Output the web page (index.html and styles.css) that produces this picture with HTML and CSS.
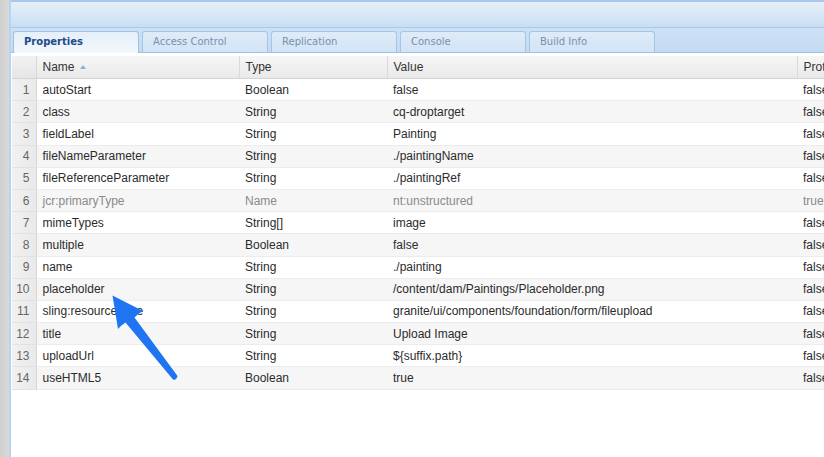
FILE: index.html
```html
<!DOCTYPE html>
<html>
<head>
<meta charset="utf-8">
<link rel="stylesheet" href="styles.css">
</head>
<body>
<div class="app">
  <div class="strip"></div>
  <div class="panel">
    <div class="topbar"></div>
    <div class="tabstrip">
      <div class="tab active">Properties</div>
      <div class="tab">Access Control</div>
      <div class="tab">Replication</div>
      <div class="tab">Console</div>
      <div class="tab">Build Info</div>
    </div>
    <div class="gridwrap">
      <table class="grid">
        <colgroup>
          <col class="c-num"><col class="c-name"><col class="c-type"><col class="c-value"><col class="c-prot">
        </colgroup>
        <thead>
          <tr><th class="num"></th><th>Name <span class="sort"></span></th><th>Type</th><th>Value</th><th>Prot</th></tr>
        </thead>
        <tbody>
          <tr><td class="num">1</td><td>autoStart</td><td>Boolean</td><td>false</td><td>false</td></tr>
          <tr><td class="num">2</td><td>class</td><td>String</td><td>cq-droptarget</td><td>false</td></tr>
          <tr><td class="num">3</td><td>fieldLabel</td><td>String</td><td>Painting</td><td>false</td></tr>
          <tr><td class="num">4</td><td>fileNameParameter</td><td>String</td><td>./paintingName</td><td>false</td></tr>
          <tr><td class="num">5</td><td>fileReferenceParameter</td><td>String</td><td>./paintingRef</td><td>false</td></tr>
          <tr class="muted"><td class="num">6</td><td>jcr:primaryType</td><td>Name</td><td>nt:unstructured</td><td>true</td></tr>
          <tr><td class="num">7</td><td>mimeTypes</td><td>String[]</td><td>image</td><td>false</td></tr>
          <tr><td class="num">8</td><td>multiple</td><td>Boolean</td><td>false</td><td>false</td></tr>
          <tr><td class="num">9</td><td>name</td><td>String</td><td>./painting</td><td>false</td></tr>
          <tr><td class="num">10</td><td>placeholder</td><td>String</td><td>/content/dam/Paintings/Placeholder.png</td><td>false</td></tr>
          <tr><td class="num">11</td><td>sling:resourceType</td><td>String</td><td>granite/ui/components/foundation/form/fileupload</td><td>false</td></tr>
          <tr><td class="num">12</td><td>title</td><td>String</td><td>Upload Image</td><td>false</td></tr>
          <tr><td class="num">13</td><td>uploadUrl</td><td>String</td><td>${suffix.path}</td><td>false</td></tr>
          <tr><td class="num">14</td><td>useHTML5</td><td>Boolean</td><td>true</td><td>false</td></tr>
        </tbody>
      </table>
    </div>
  </div>
</div>
<svg class="arrow" width="824" height="457" viewBox="0 0 824 457">
  <path d="M112.5 295.5 L143 311 Q137.5 314 134.5 317.5 L177.5 376 Q176.5 380.5 173 379.5 L125.5 322.5 Q121 325.5 118 329 Z" fill="#1f74f2"/>
</svg>
</body>
</html>
```

FILE: styles.css
```css
html, body {
  margin: 0;
  padding: 0;
}
body {
  width: 824px;
  height: 457px;
  overflow: hidden;
  background: #ffffff;
  position: relative;
  font-family: "Liberation Sans", Arial, sans-serif;
}
.app {
  display: flex;
  height: 457px;
}
.strip {
  width: 9px;
  flex: none;
  background: linear-gradient(to right, #cfcfcf, #dadada);
}
.panel {
  flex: 1;
  display: flex;
  flex-direction: column;
  border-left: 2px solid #b7d3ef;
  min-width: 0;
}
.topbar {
  height: 28px;
  flex: none;
  border-top: 2px solid #a9c9ea;
  box-sizing: border-box;
  background: linear-gradient(to bottom, #e6f0f9 0%, #dae9f7 40%, #c9def3 100%);
  border-bottom: 1px solid #a8c9ec;
}
.tabstrip {
  height: 25px;
  flex: none;
  box-sizing: border-box;
  display: flex;
  align-items: flex-end;
  gap: 3px;
  padding-left: 2px;
  background: linear-gradient(to bottom, #cde1f5, #c3dbf2);
  border-bottom: 1px solid #9dc0e6;
}
.tab {
  width: 126px;
  height: 21px;
  box-sizing: border-box;
  border: 1px solid #a5c5e8;
  border-bottom: none;
  border-radius: 3px 3px 0 0;
  background: linear-gradient(to bottom, #dfebf8, #d2e4f5);
  font-family: "DejaVu Sans", Verdana, sans-serif;
  font-size: 10px;
  line-height: 20px;
  color: #7990ad;
  padding-left: 10px;
}
.tab.active {
  height: 22px;
  font-weight: bold;
  color: #1d4a8a;
  background: linear-gradient(to bottom, #e4eff9, #f4f8fc);
  border-color: #9fc1e6;
  margin-bottom: -1px;
}
.gridwrap {
  padding-top: 3px;
  padding-left: 1px;
}
.grid {
  table-layout: fixed;
  border-collapse: collapse;
  width: 900px;
  font-size: 12px;
  color: #2b2b2b;
}
.c-num { width: 24px; }
.c-name { width: 203px; }
.c-type { width: 148px; }
.c-value { width: 410px; }
.c-prot { width: 115px; }
.grid th {
  height: 22px;
  padding: 0 0 0 6px;
  text-align: left;
  font-weight: normal;
  color: #333;
  background: linear-gradient(to bottom, #f6f6f6, #e9e9e9);
  border-right: 1px solid #dadada;
  border-bottom: 1px solid #d4d4d4;
  white-space: nowrap;
}
.grid th.num {
  background: linear-gradient(to bottom, #f2f2f2, #e6e6e6);
  border-right: 1px solid #d8d8d8;
}
.sort {
  display: inline-block;
  width: 0;
  height: 0;
  border-left: 3.5px solid transparent;
  border-right: 3.5px solid transparent;
  border-bottom: 4px solid #8fb0cf;
  vertical-align: middle;
  margin-left: 2px;
  margin-top: -2px;
}
.grid td {
  height: 21.2px;
  padding: 0 0 0 6px;
  border-bottom: 1px solid #ececec;
  white-space: nowrap;
  overflow: hidden;
}
.grid tbody tr:nth-child(even) td {
  background: #f6f6f6;
}
.grid td.num,
.grid tbody tr:nth-child(even) td.num {
  text-align: right;
  padding: 0 6px 0 0;
  color: #666;
  background: linear-gradient(to right, #f1f1f1, #e9e9e9);
  border-right: 1px solid #d6d6d6;
  border-bottom: 1px solid #e2e2e2;
}
.grid tr.muted td {
  color: #8a8a8a;
}
.grid tr.muted td.num {
  color: #666;
}
.arrow {
  position: absolute;
  left: 0;
  top: 0;
  pointer-events: none;
}
```
